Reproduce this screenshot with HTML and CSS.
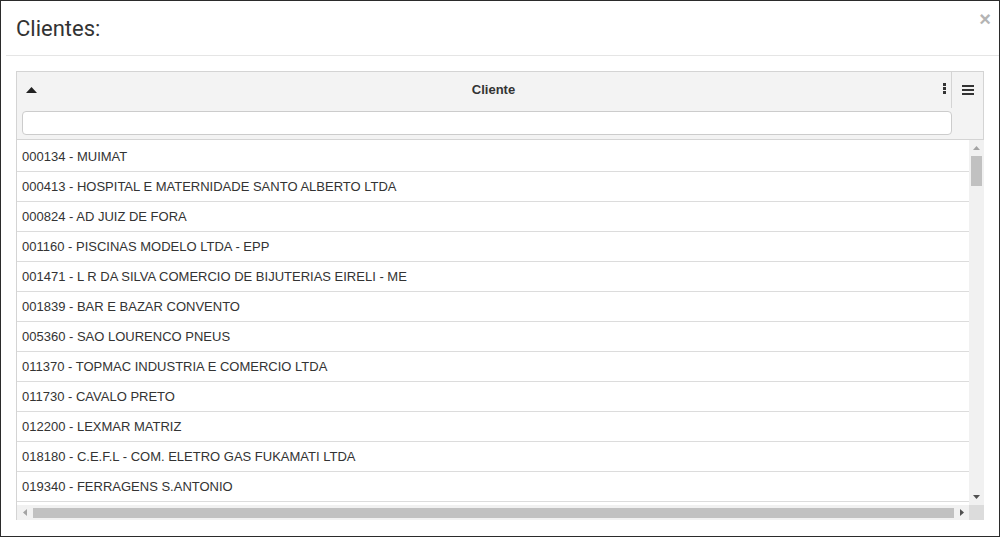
FILE: index.html
```html
<!DOCTYPE html>
<html lang="pt">
<head>
<meta charset="utf-8">
<title>Clientes</title>
<link rel="stylesheet" href="styles.css">
</head>
<body>
<div class="modal">
  <div class="modal-header">
    <h4 class="modal-title">Clientes:</h4>
    <button class="close" type="button">×</button>
  </div>
  <div class="modal-body">
    <div class="grid">
      <div class="grid-header">
        <div class="col-header">
          <div class="col-title-row">
            <svg class="sort-icon" width="11" height="6" viewBox="0 0 11 6"><polygon points="0,6 5.5,0 11,6" fill="#222"/></svg>
            <span class="col-title">Cliente</span>
            <svg class="col-menu-icon" width="3" height="11" viewBox="0 0 3 11"><rect x="0" y="0" width="3" height="3" fill="#333"/><rect x="0" y="4" width="3" height="3" fill="#333"/><rect x="0" y="8" width="3" height="3" fill="#333"/></svg>
          </div>
          <div class="col-filter-row">
            <input class="filter-input" type="text">
          </div>
        </div>
        <div class="grid-menu">
          <svg width="12" height="10" viewBox="0 0 12 10"><rect x="0" y="0" width="12" height="2" fill="#333"/><rect x="0" y="4" width="12" height="2" fill="#333"/><rect x="0" y="8" width="12" height="2" fill="#333"/></svg>
        </div>
      </div>
      <div class="grid-body">
        <div class="viewport">
          <div class="row">000134 - MUIMAT</div>
          <div class="row">000413 - HOSPITAL E MATERNIDADE SANTO ALBERTO LTDA</div>
          <div class="row">000824 - AD JUIZ DE FORA</div>
          <div class="row">001160 - PISCINAS MODELO LTDA - EPP</div>
          <div class="row">001471 - L R DA SILVA COMERCIO DE BIJUTERIAS EIRELI - ME</div>
          <div class="row">001839 - BAR E BAZAR CONVENTO</div>
          <div class="row">005360 - SAO LOURENCO PNEUS</div>
          <div class="row">011370 - TOPMAC INDUSTRIA E COMERCIO LTDA</div>
          <div class="row">011730 - CAVALO PRETO</div>
          <div class="row">012200 - LEXMAR MATRIZ</div>
          <div class="row">018180 - C.E.F.L - COM. ELETRO GAS FUKAMATI LTDA</div>
          <div class="row">019340 - FERRAGENS S.ANTONIO</div>
          <div class="row"></div>
        </div>
        <div class="vscroll">
          <svg class="arrow" width="7" height="4" viewBox="0 0 7 4"><polygon points="0,4 3.5,0 7,4" fill="#a3a3a3"/></svg>
          <div class="vtrack"><div class="vthumb"></div></div>
          <svg class="arrow" width="7" height="4" viewBox="0 0 7 4"><polygon points="0,0 3.5,4 7,0" fill="#505050"/></svg>
        </div>
        <div class="hscroll">
          <svg class="arrow" width="4" height="7" viewBox="0 0 4 7"><polygon points="4,0 0,3.5 4,7" fill="#a3a3a3"/></svg>
          <div class="htrack"><div class="hthumb"></div></div>
          <svg class="arrow" width="4" height="7" viewBox="0 0 4 7"><polygon points="0,0 4,3.5 0,7" fill="#505050"/></svg>
        </div>
        <div class="corner"></div>
      </div>
    </div>
  </div>
</div>
</body>
</html>
```

FILE: styles.css
```css
html, body {
  margin: 0;
  padding: 0;
  background: #fff;
}

.modal {
  box-sizing: border-box;
  width: 1000px;
  height: 537px;
  border: 1px solid #2b2b2b;
  display: flex;
  flex-direction: column;
  font-family: "Liberation Sans", Arial, sans-serif;
  color: #333;
}

.modal-header {
  height: 54px;
  margin-left: 5px;
  padding: 0 8px 0 10px;
  border-bottom: 1px solid #e5e5e5;
  display: flex;
  justify-content: space-between;
  align-items: center;
}

.modal-title {
  margin: 0;
  font-family: Roboto, "Liberation Sans", sans-serif;
  font-weight: 400;
  font-size: 22px;
  color: #333;
}

.close {
  align-self: flex-start;
  margin-top: 8px;
  padding: 0;
  border: 0;
  background: none;
  font-family: "Liberation Sans", Arial, sans-serif;
  font-size: 20px;
  font-weight: 700;
  line-height: 20px;
  color: #b4b4b4;
}

.modal-body {
  padding: 15px;
  flex: 1;
  display: flex;
  flex-direction: column;
}

.grid {
  height: 449px;
  box-sizing: border-box;
  border: 1px solid #d4d4d4;
  border-bottom: 0;
  display: flex;
  flex-direction: column;
}

.grid-header {
  display: flex;
  background: #f3f3f3;
  border-bottom: 1px solid #d4d4d4;
  height: 68px;
  box-sizing: border-box;
}

.col-header {
  flex: 1;
  display: flex;
  flex-direction: column;
}

.col-title-row {
  height: 36px;
  box-sizing: border-box;
  padding: 0 5px 1px 9px;
  display: flex;
  align-items: center;
  border-right: 1px solid #d4d4d4;
}

.sort-icon {
  flex: none;
}

.col-title {
  flex: 1;
  text-align: center;
  font-weight: 700;
  font-size: 13px;
  color: #333;
  padding-left: 7px;
}

.col-menu-icon {
  flex: none;
  margin-top: -2px;
}

.col-filter-row {
  padding: 3px 0 0 5px;
  display: flex;
}

.filter-input {
  box-sizing: border-box;
  flex: 1;
  margin: 0;
  height: 24px;
  border: 1px solid #ccc;
  border-radius: 4px;
  background: #fff;
}

.grid-menu {
  width: 31px;
  display: flex;
  justify-content: center;
  padding-top: 13px;
  box-sizing: border-box;
}

.grid-body {
  flex: 1;
  display: grid;
  grid-template-columns: 1fr 15px;
  grid-template-rows: 1fr 15px;
  min-height: 0;
  margin-right: -1px;
}

.viewport {
  overflow: hidden;
  padding-top: 2px;
}

.row {
  height: 29px;
  border-bottom: 1px solid #dcdcdc;
  padding-left: 5px;
  font-size: 13px;
  line-height: 29px;
  color: #333;
  white-space: nowrap;
}

.vscroll {
  background: #f1f1f1;
  display: flex;
  flex-direction: column;
  align-items: center;
  padding-top: 1px;
}

.vscroll .arrow {
  flex: none;
  margin: 5px 0 6px;
}

.vtrack {
  flex: 1;
  width: 100%;
  display: flex;
  justify-content: center;
}

.vthumb {
  width: 11px;
  height: 30px;
  background: #c1c1c1;
}

.hscroll {
  background: #f1f1f1;
  display: flex;
  align-items: center;
  padding: 0 5px 0 6px;
}

.hscroll .arrow {
  flex: none;
}

.htrack {
  flex: 1;
  height: 100%;
  display: flex;
  align-items: center;
  padding: 0 6px 0 6px;
}

.hthumb {
  flex: 1;
  height: 10px;
  background: #c1c1c1;
}

.corner {
  background: #dcdcdc;
}
```
